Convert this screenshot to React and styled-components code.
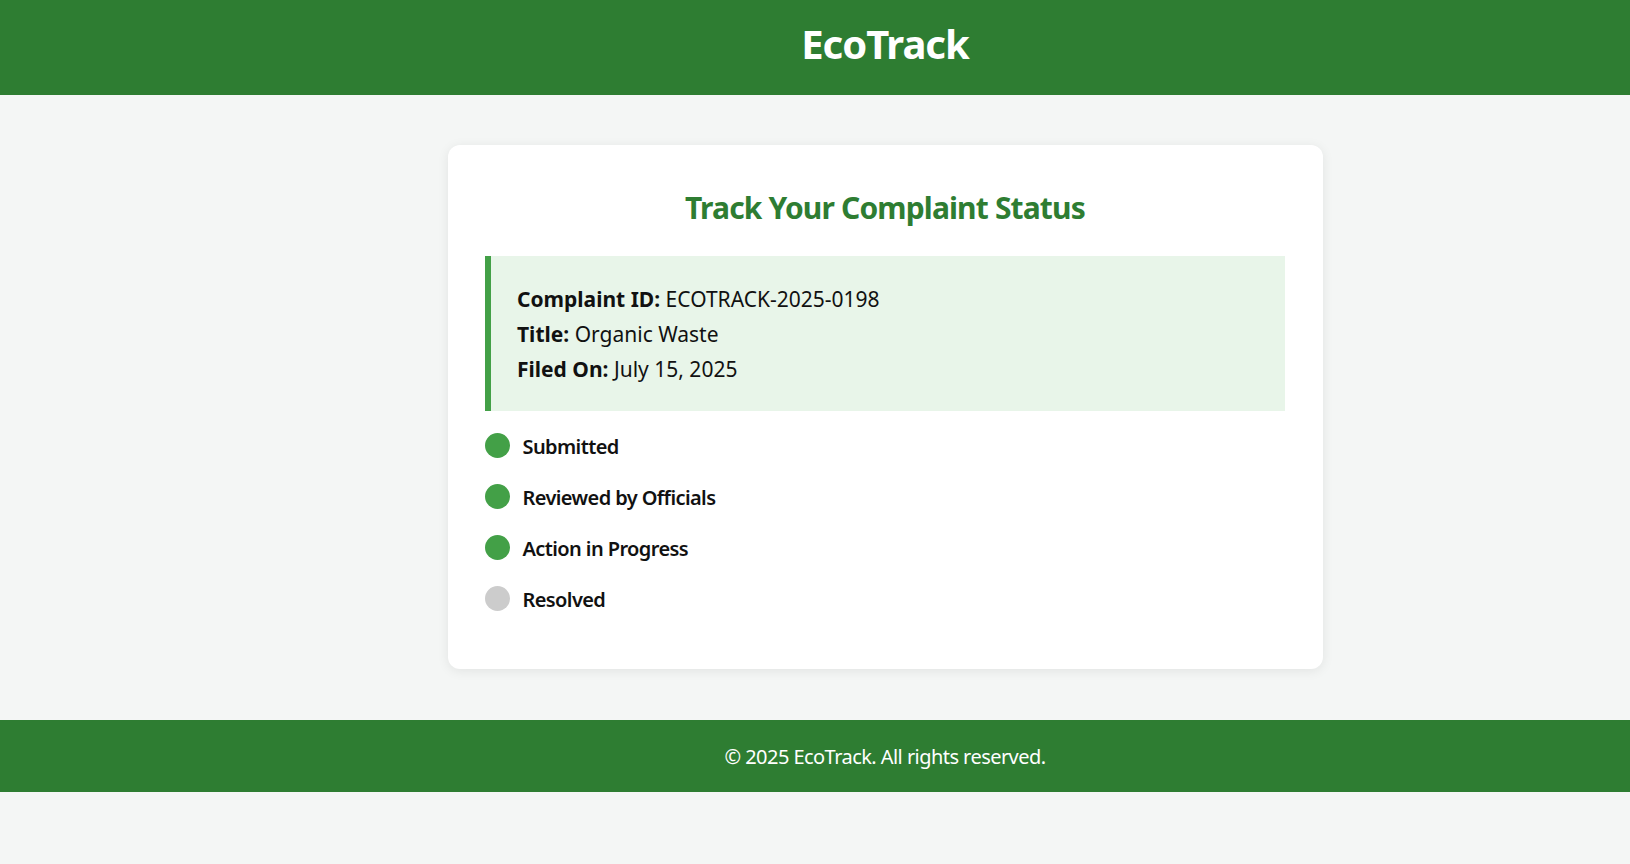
import React from 'react';
import styled, { createGlobalStyle, css } from 'styled-components';

const GlobalStyle = createGlobalStyle`
  html, body {
    margin: 0;
    padding: 0;
    background: #f4f6f5;
    font-family: "Noto Sans", "Open Sans", sans-serif;
    color: #111;
  }
`;

// the original layout is centred a little right of the viewport centre
const offset = css`
  padding-left: 140px;
`;

const Page = styled.div`
  min-height: 864px;
  display: flex;
  flex-direction: column;
  background: #f4f6f5;
`;

const Header = styled.header`
  ${offset};
  height: 95px;
  box-sizing: border-box;
  padding-bottom: 8px;
  background: #2e7d32;
  display: flex;
  align-items: center;
  justify-content: center;
  h1 {
    margin: 0;
    color: #fff;
    font-size: 40px;
    font-weight: 700;
    letter-spacing: -1px;
  }
`;

const Main = styled.main`
  ${offset};
  display: flex;
  justify-content: center;
  padding-top: 50px;
  padding-bottom: 51px;
`;

const Card = styled.section`
  width: 800px;
  padding: 37.5px;
  background: #fff;
  border-radius: 12px;
  box-shadow: 0 2px 12px rgba(0, 0, 0, 0.08);
`;

const Title = styled.h2`
  margin: 7px 0 30px;
  text-align: center;
  color: #2e7d32;
  font-size: 30px;
  line-height: 36px;
  font-weight: 700;
  letter-spacing: -0.85px;
`;

const Info = styled.div`
  background: #e8f5e9;
  border-left: 6px solid #43a047;
  padding: 26px 26px 24px;
  font-size: 21px;
  line-height: 35px;
  letter-spacing: 0;
  strong { font-weight: 700; }
`;

const Steps = styled.ul`
  list-style: none;
  margin: 22px 0 21px;
  padding: 0;
  display: flex;
  flex-direction: column;
  gap: 26px;
`;

const Step = styled.li`
  display: flex;
  align-items: center;
  gap: 12.5px;
  height: 25px;
  font-size: 20px;
  line-height: 25px;
  font-weight: 600;
  letter-spacing: -0.6px;
  span + span { padding-top: 2px; }
`;

const Dot = styled.span`
  width: 25px;
  height: 25px;
  border-radius: 50%;
  flex: none;
  background: ${p => (p.$done ? '#43a047' : '#cccccc')};
`;

const Footer = styled.footer`
  ${offset};
  height: 72px;
  background: #2e7d32;
  color: #fff;
  display: flex;
  align-items: center;
  justify-content: center;
  font-size: 20px;
  letter-spacing: -0.55px;
`;

const steps = [
  { label: 'Submitted', done: true },
  { label: 'Reviewed by Officials', done: true },
  { label: 'Action in Progress', done: true },
  { label: 'Resolved', done: false },
];

export default function App() {
  return (
    <Page>
      <GlobalStyle />
      <Header>
        <h1>EcoTrack</h1>
      </Header>
      <Main>
        <Card>
          <Title>Track Your Complaint Status</Title>
          <Info>
            <div><strong>Complaint ID:</strong> ECOTRACK-2025-0198</div>
            <div><strong>Title:</strong> Organic Waste</div>
            <div><strong>Filed On:</strong> July 15, 2025</div>
          </Info>
          <Steps>
            {steps.map(s => (
              <Step key={s.label}>
                <Dot $done={s.done} />
                <span>{s.label}</span>
              </Step>
            ))}
          </Steps>
        </Card>
      </Main>
      <Footer>© 2025 EcoTrack. All rights reserved.</Footer>
    </Page>
  );
}
